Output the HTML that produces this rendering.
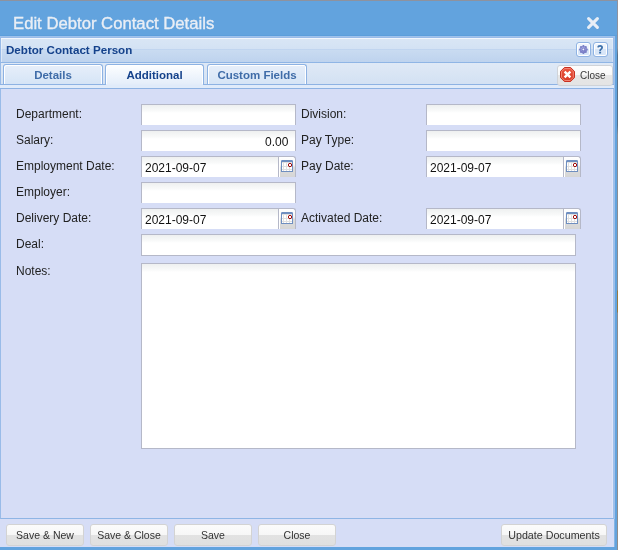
<!DOCTYPE html>
<html><head><meta charset="utf-8">
<style>
*{box-sizing:border-box;margin:0;padding:0}
html,body{width:618px;height:550px;overflow:hidden;background:#62a3de;font-family:"Liberation Sans",sans-serif}
.lbl,.val,.btn,.tab,#title,#phtitle{will-change:transform}
.a{position:absolute}
#top{left:0;top:0;width:618px;height:1px;background:#8e929e}
#rgray{left:617px;top:0;width:1px;height:550px;background:linear-gradient(#8e929e 0,#8e929e 48px,#56708a 55px,#56708a 125px,#8a8e96 135px,#8a8c90 290px,#9a7a40 291px,#9a7a40 312px,#8f8c8c 313px,#8f8c8c 100%)}
#title{left:13px;top:12px;font-size:16.7px;color:#e9eef5;-webkit-text-stroke:0.35px #e9eef5;white-space:nowrap;line-height:24px}
#xclose{left:586px;top:16px;width:14px;height:14px}
#r36{left:0;top:36px;width:614px;height:1px;background:#9fc2eb}
/* panel header */
#ph{left:0;top:37px;width:614px;height:26px;border:1px solid #99bbe8;border-bottom:1px solid #8fb5e5;box-shadow:inset 1px 0 0 rgba(255,255,255,0.45);
 background:linear-gradient(#f3f7fd 0,#f3f7fd 1px,#d9e6f5 1px,#d3e2f4 11px,#bed3ef 11px,#c3d7f0 12px,#c9dbf1 12px,#bed3ee 100%)}
#ph .hl{left:0;top:0;width:612px;height:1px;background:#f3f7fd}
#phtitle{left:6px;top:43px;font-size:11.6px;font-weight:bold;color:#15428b;white-space:nowrap;line-height:14px}
.tool{top:42px;width:15px;height:15px;border:1px solid #8fb3e3;border-radius:3px;background:linear-gradient(#eef4fc 0,#eef4fc 50%,#d8e6f8 50%,#d8e6f8 100%);box-shadow:inset 0 0 0 1px #fff}
/* tab strip */
#ts{left:0;top:63px;width:614px;height:26px;background:linear-gradient(#dfe9f6,#d3e1f3 21px);border-left:1px solid #99bbe8;border-right:1px solid #99bbe8}
#tsline{left:0;top:84px;width:614px;height:1px;background:#8db2e3}
#tsbot{left:0;top:85px;width:614px;height:3px;background:#e0ebfa}
#tsb2{left:0;top:88px;width:614px;height:1px;background:#8db2e3}
.tab{top:64px;height:20px;border:1px solid #8db2e3;border-bottom:none;border-radius:3px 3px 0 0;
 background:linear-gradient(#e7effa,#d5e4f6);box-shadow:inset 1px 1px 0 #fff,inset -1px 0 0 #fff;
 font-size:11.5px;font-weight:bold;color:#3f6ca8;text-align:center;line-height:20px;white-space:nowrap}
.tab.act{height:21px;background:linear-gradient(#fdfeff,#e3edfa);color:#15428b}
/* body */
#body{left:0;top:89px;width:614px;height:430px;background:#d6ddf6;border-left:1px solid #99bbe8;border-right:1px solid #a0c0ea;border-bottom:1px solid #8fb5e5}
#tb{left:0;top:519px;width:614px;height:28px;background:#d6ddf6}
#bblue{left:0;top:547px;width:617px;height:3px;background:#62a3de}
.lbl{font-size:12px;color:#222;white-space:nowrap;line-height:14px}
.inp{height:21px;border:1px solid #b5b8c8;border-bottom:none;background:linear-gradient(#eef0f0 0,#f9fafa 6px,#fff 8px,#fff 100%)}
.inp2{height:22px;border:1px solid #b5b8c8;background:linear-gradient(#eef0f0 0,#f9fafa 6px,#fff 8px,#fff 100%)}
.val{font-size:12px;color:#111;white-space:nowrap;line-height:14px}
.trig{width:17px;height:21px;border-right:1px solid #b5b8c8;border-top:1px solid #b5b8c8;border-radius:0 3px 0 0;background:linear-gradient(#fff 0,#f6f6f6 40%,#dcdcdc 52%,#d6d6d6 100%);box-shadow:inset 1px 1px 0 #fff}
.btn{top:524px;height:22px;border:1px solid #d3d3d3;border-radius:3px;background:linear-gradient(#fbfbfb 0,#f6f6f6 50%,#e2e2e2 52%,#e0e0e0 100%);
 font-size:10.5px;color:#333;text-align:center;line-height:20px;white-space:nowrap}
</style></head><body>
<div class="a" id="top"></div>
<div class="a" id="title">Edit Debtor Contact Details</div>
<svg class="a" id="xclose" viewBox="0 0 14 14"><path d="M2.6 2.6L11.4 11.4M11.4 2.6L2.6 11.4" stroke="#e8eef6" stroke-width="3.1" stroke-linecap="round"/></svg>
<div class="a" style="left:0;top:35px;width:617px;height:1px;background:#5b9edb"></div>
<div class="a" id="r36"></div>
<div class="a" id="ph"><div class="a hl"></div></div>
<div class="a" id="phtitle">Debtor Contact Person</div>
<div class="a tool" style="left:576px"></div>
<div class="a tool" style="left:593px"></div>
<svg class="a" style="left:577px;top:43px" width="13" height="13" viewBox="0 0 13 13"><defs><radialGradient id="gg" cx="0.45" cy="0.4" r="0.6"><stop offset="0" stop-color="#c4c7ee"/><stop offset="0.6" stop-color="#9296d6"/><stop offset="1" stop-color="#5f64b4"/></radialGradient></defs><g transform="translate(6.4 6.5)" fill="url(#gg)"><circle r="3.4"/><g fill="#7c81c8"><g id="t"><rect x="-1" y="-4.4" width="2" height="1.9" rx="0.6"/><rect x="-1" y="2.5" width="2" height="1.9" rx="0.6"/></g><use href="#t" transform="rotate(45)"/><use href="#t" transform="rotate(90)"/><use href="#t" transform="rotate(135)"/></g><circle r="1.5" fill="none" stroke="#7378c2" stroke-width="0.9"/><circle r="0.7" fill="#f0f0ff"/></g></svg>
<svg class="a" style="left:594px;top:43px" width="13" height="13" viewBox="0 0 13 13"><path d="M4 4.4Q4.2 2.8 6.1 2.8Q8.1 2.8 8.1 4.5Q8.1 5.5 7 6.2Q6.1 6.7 6.1 7.9" fill="none" stroke="#3d70aa" stroke-width="1.8"/><rect x="5.1" y="8.7" width="2" height="1.8" fill="#3d70aa"/></svg>

<div class="a" id="ts"></div>
<div class="a" id="tsline"></div>
<div class="a" id="tsbot"></div>
<div class="a" id="tsb2"></div>
<div class="a tab" style="left:3px;width:100px">Details</div>
<div class="a tab act" style="left:105px;width:99px">Additional</div>
<div class="a" style="left:106px;top:84px;width:97px;height:1px;background:#e2ecfa"></div>
<div class="a tab" style="left:207px;width:100px">Custom Fields</div>

<div class="a" style="left:557px;top:65px;width:56px;height:21px;border:1px solid #cfd3d8;border-radius:3px;background:linear-gradient(#fdfdfd 0,#f8f8f8 48%,#e6e6e6 50%,#e4e4e4 100%)"></div>
<svg class="a" style="left:560px;top:67px" width="15" height="15" viewBox="0 0 15 15"><defs><linearGradient id="og" x1="0" y1="0" x2="0" y2="1"><stop offset="0" stop-color="#ec5640"/><stop offset="1" stop-color="#d63a27"/></linearGradient></defs><path d="M4.4 0.5h6.2l3.9 3.9v6.2l-3.9 3.9H4.4L0.5 10.6V4.4z" fill="url(#og)" stroke="#c93020"/><path d="M4.8 1.5h5.4l3.1 3.1v5.8l-3.1 3.1H4.8L1.5 10.4V4.6z" fill="none" stroke="#f48a78" stroke-width="0.9"/><path d="M4.6 4.6L10.4 10.4M10.4 4.6L4.6 10.4" stroke="#fff" stroke-width="2.4"/></svg>
<div class="a" style="left:580px;top:69px;font-size:10px;color:#3a3a3a;line-height:14px">Close</div>
<div class="a" id="body"></div>
<div class="a" id="tb"></div>
<div class="a" id="bblue"></div>
<div class="a" style="left:614px;top:36px;width:1px;height:483px;background:#9fbfea"></div>
<div class="a" style="left:614px;top:519px;width:1px;height:28px;background:#86b4e4"></div>
<div class="a" style="left:612px;top:39px;width:1px;height:23px;background:rgba(255,255,255,0.25)"></div>
<div class="a" style="left:612px;top:89px;width:1px;height:429px;background:rgba(255,255,255,0.25)"></div>
<div class="a" id="rgray"></div>

<!-- labels -->
<div class="a lbl" style="left:16px;top:107px">Department:</div>
<div class="a lbl" style="left:16px;top:133px">Salary:</div>
<div class="a lbl" style="left:16px;top:159px">Employment Date:</div>
<div class="a lbl" style="left:16px;top:185px">Employer:</div>
<div class="a lbl" style="left:16px;top:211px">Delivery Date:</div>
<div class="a lbl" style="left:16px;top:237px">Deal:</div>
<div class="a lbl" style="left:16px;top:264px">Notes:</div>
<div class="a lbl" style="left:301px;top:107px">Division:</div>
<div class="a lbl" style="left:301px;top:133px">Pay Type:</div>
<div class="a lbl" style="left:301px;top:159px">Pay Date:</div>
<div class="a lbl" style="left:301px;top:211px">Activated Date:</div>

<!-- inputs -->
<div class="a inp" style="left:141px;top:104px;width:155px"></div>
<div class="a inp" style="left:141px;top:130px;width:155px"></div>
<div class="a val" style="left:265px;top:135px">0.00</div>
<div class="a inp" style="left:141px;top:156px;width:138px"></div>
<div class="a trig" style="left:279px;top:156px"></div><svg class="a" style="left:281px;top:160px" width="12" height="12" viewBox="0 0 12 12" shape-rendering="crispEdges"><rect x="1" y="2" width="10" height="9" fill="#fff"/><path fill="#e0e0e0" d="M2 2h1v9H2zM5 2h1v9H5zM8 2h1v9H8zM1 2h10v1H1zM1 6h10v1H1zM1 9h10v1H1z"/><path fill="#6f8fc0" d="M1 0h10v2H1zM0 1h1v11H0zM11 1h1v11h-1zM1 11h10v1H1z"/><path fill="#9fb5d8" d="M0 0h1v1H0zM11 0h1v1h-1z"/><path fill="#fff" d="M8 4h2v2H8z"/><path fill="#a00f0f" d="M8 3h2v1H8zM8 6h2v1H8zM7 4h1v2H7zM10 4h1v2h-1z"/><path fill="#c86060" d="M7 3h1v1H7zM10 3h1v1h-1zM7 6h1v1H7zM10 6h1v1h-1z" opacity="0.5"/></svg>
<div class="a val" style="left:145px;top:161px">2021-09-07</div>
<div class="a inp" style="left:141px;top:182px;width:155px"></div>
<div class="a inp" style="left:141px;top:208px;width:138px"></div>
<div class="a trig" style="left:279px;top:208px"></div><svg class="a" style="left:281px;top:212px" width="12" height="12" viewBox="0 0 12 12" shape-rendering="crispEdges"><rect x="1" y="2" width="10" height="9" fill="#fff"/><path fill="#e0e0e0" d="M2 2h1v9H2zM5 2h1v9H5zM8 2h1v9H8zM1 2h10v1H1zM1 6h10v1H1zM1 9h10v1H1z"/><path fill="#6f8fc0" d="M1 0h10v2H1zM0 1h1v11H0zM11 1h1v11h-1zM1 11h10v1H1z"/><path fill="#9fb5d8" d="M0 0h1v1H0zM11 0h1v1h-1z"/><path fill="#fff" d="M8 4h2v2H8z"/><path fill="#a00f0f" d="M8 3h2v1H8zM8 6h2v1H8zM7 4h1v2H7zM10 4h1v2h-1z"/><path fill="#c86060" d="M7 3h1v1H7zM10 3h1v1h-1zM7 6h1v1H7zM10 6h1v1h-1z" opacity="0.5"/></svg>
<div class="a val" style="left:145px;top:213px">2021-09-07</div>
<div class="a inp2" style="left:141px;top:234px;width:435px"></div>
<div class="a inp2" style="left:141px;top:263px;width:435px;height:186px"></div>

<div class="a inp" style="left:426px;top:104px;width:155px"></div>
<div class="a inp" style="left:426px;top:130px;width:155px"></div>
<div class="a inp" style="left:426px;top:156px;width:138px"></div>
<div class="a trig" style="left:564px;top:156px"></div><svg class="a" style="left:566px;top:160px" width="12" height="12" viewBox="0 0 12 12" shape-rendering="crispEdges"><rect x="1" y="2" width="10" height="9" fill="#fff"/><path fill="#e0e0e0" d="M2 2h1v9H2zM5 2h1v9H5zM8 2h1v9H8zM1 2h10v1H1zM1 6h10v1H1zM1 9h10v1H1z"/><path fill="#6f8fc0" d="M1 0h10v2H1zM0 1h1v11H0zM11 1h1v11h-1zM1 11h10v1H1z"/><path fill="#9fb5d8" d="M0 0h1v1H0zM11 0h1v1h-1z"/><path fill="#fff" d="M8 4h2v2H8z"/><path fill="#a00f0f" d="M8 3h2v1H8zM8 6h2v1H8zM7 4h1v2H7zM10 4h1v2h-1z"/><path fill="#c86060" d="M7 3h1v1H7zM10 3h1v1h-1zM7 6h1v1H7zM10 6h1v1h-1z" opacity="0.5"/></svg>
<div class="a val" style="left:430px;top:161px">2021-09-07</div>
<div class="a inp" style="left:426px;top:208px;width:138px"></div>
<div class="a trig" style="left:564px;top:208px"></div><svg class="a" style="left:566px;top:212px" width="12" height="12" viewBox="0 0 12 12" shape-rendering="crispEdges"><rect x="1" y="2" width="10" height="9" fill="#fff"/><path fill="#e0e0e0" d="M2 2h1v9H2zM5 2h1v9H5zM8 2h1v9H8zM1 2h10v1H1zM1 6h10v1H1zM1 9h10v1H1z"/><path fill="#6f8fc0" d="M1 0h10v2H1zM0 1h1v11H0zM11 1h1v11h-1zM1 11h10v1H1z"/><path fill="#9fb5d8" d="M0 0h1v1H0zM11 0h1v1h-1z"/><path fill="#fff" d="M8 4h2v2H8z"/><path fill="#a00f0f" d="M8 3h2v1H8zM8 6h2v1H8zM7 4h1v2H7zM10 4h1v2h-1z"/><path fill="#c86060" d="M7 3h1v1H7zM10 3h1v1h-1zM7 6h1v1H7zM10 6h1v1h-1z" opacity="0.5"/></svg>
<div class="a val" style="left:430px;top:213px">2021-09-07</div>

<!-- buttons -->
<div class="a btn" style="left:6px;width:78px">Save &amp; New</div>
<div class="a btn" style="left:90px;width:78px">Save &amp; Close</div>
<div class="a btn" style="left:174px;width:78px">Save</div>
<div class="a btn" style="left:258px;width:78px">Close</div>
<div class="a btn" style="left:501px;width:106px;font-size:10.7px">Update Documents</div>

</body></html>
